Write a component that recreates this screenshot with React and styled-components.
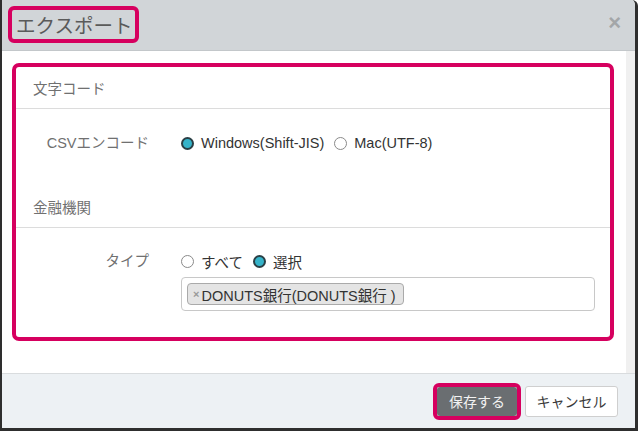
import React from 'react';
import styled, { createGlobalStyle } from 'styled-components';

const GlobalStyle = createGlobalStyle`
  html, body {
    margin: 0;
    padding: 0;
    background: #ffffff;
  }
  body {
    font-family: "Liberation Sans", "Noto Sans CJK JP", sans-serif;
  }
  * {
    box-sizing: border-box;
  }
`;

const MAGENTA = '#d6005f';

const Frame = styled.div`
  width: 638px;
  height: 431px;
  display: flex;
  flex-direction: column;
  border-left: 2px solid #2e2e2e;
  border-right: 3px solid #2e2e2e;
  border-bottom: 3px solid #2e2e2e;
  border-top-right-radius: 6px;
  overflow: hidden;
  background: #fff;
`;

const Header = styled.div`
  height: 51px;
  flex: none;
  display: flex;
  justify-content: space-between;
  align-items: flex-start;
  padding: 6px 14px 0 6px;
  background: #d1d5d8;
  border-bottom: 1px solid #c3c7ca;
`;

const Highlight = styled.div`
  border: 4px solid ${MAGENTA};
  border-radius: 6px;
  padding: ${({ pad }) => pad || '0'};
`;

const Title = styled.h4`
  margin: 0;
  font-size: 19.5px;
  font-weight: normal;
  line-height: 29px;
  color: #5a5a5a;
  font-family: "Noto Sans CJK JP", sans-serif;
`;

const Close = styled.span`
  margin-top: 7px;
  font-size: 22px;
  line-height: 20px;
  font-weight: bold;
  color: #a3a6a8;
`;

const Body = styled.div`
  flex: 1;
  display: flex;
  border-bottom: 1px solid #d9dcde;
`;

const Content = styled.div`
  flex: 1;
  padding: 12px 12px 0 10px;
`;

const ScrollTrack = styled.div`
  width: 9px;
  background: #f0f0f0;
`;

const Panel = styled.div`
  border: 4px solid ${MAGENTA};
  border-radius: 7px;
  padding-bottom: 26px;
`;

const Legend = styled.div`
  height: 42px;
  line-height: 41px;
  padding-left: 17px;
  font-size: 14.5px;
  color: #707070;
  font-family: "Noto Sans CJK JP", sans-serif;
  border-bottom: 1px solid #dcdcdc;
  margin-top: ${({ top }) => top || '0'};
`;

const FormRow = styled.div`
  display: grid;
  grid-template-columns: 148px 1fr;
  margin-top: ${({ top }) => top};
`;

const Label = styled.div`
  text-align: right;
  padding-right: 15px;
  font-size: 14.5px;
  line-height: 20px;
  color: #707070;
`;

const Control = styled.div`
  padding: 0 15px 0 17px;
  display: flex;
  flex-direction: column;
  gap: 6px;
`;

const Radios = styled.div`
  display: flex;
  align-items: center;
  height: 20px;
`;

const RadioItem = styled.label`
  display: flex;
  align-items: center;
  gap: 7px;
  margin-right: 10px;
  font-size: 14.5px;
  color: #333;
`;

const Dot = styled.span`
  width: 13px;
  height: 13px;
  border-radius: 50%;
  flex: none;
  border: ${({ checked }) => (checked ? '2.5px solid #2a3f45' : '1.5px solid #8a8a8a')};
  background: ${({ checked }) => (checked ? '#35b3c9' : '#fff')};
`;

const SelectBox = styled.div`
  height: 34px;
  border: 1px solid #c8c8c8;
  border-radius: 4px;
  padding: 5px 5px;
  display: flex;
  align-items: flex-start;
`;

const Tag = styled.span`
  display: inline-flex;
  align-items: center;
  height: 22px;
  padding: 0 7px 0 5px;
  background: #e4e4e4;
  border: 1px solid #aaa;
  border-radius: 4px;
  font-size: 14.5px;
  color: #333;
`;

const TagRemove = styled.span`
  color: #999;
  font-size: 11px;
  font-weight: bold;
  margin-right: 2px;
`;

const Footer = styled.div`
  height: 54px;
  flex: none;
  display: flex;
  justify-content: flex-end;
  align-items: center;
  gap: 4px;
  padding-right: 17px;
  background: #edf1f4;
`;

const Button = styled.button`
  font-family: "Noto Sans CJK JP", sans-serif;
  font-size: 14px;
  border-radius: 3px;
  cursor: pointer;
  width: ${({ w }) => w};
  height: ${({ h }) => h};
  padding: 0;
  color: ${({ primary }) => (primary ? '#f2f2f2' : '#3a3a3a')};
  background: ${({ primary }) => (primary ? '#6a6e71' : '#fff')};
  border: ${({ primary }) => (primary ? 'none' : '1px solid #cfcfcf')};
  display: block;
`;

const radio = (text, checked) => (
  <RadioItem>
    <Dot checked={checked} />
    {text}
  </RadioItem>
);

export default function App() {
  return (
    <>
      <GlobalStyle />
      <Frame>
        <Header>
          <Highlight pad="0 3px 0 4px">
            <Title>エクスポート</Title>
          </Highlight>
          <Close>×</Close>
        </Header>
        <Body>
          <Content>
            <Panel>
              <Legend>文字コード</Legend>
              <FormRow top="24px">
                <Label>CSVエンコード</Label>
                <Control>
                  <Radios>
                    {radio('Windows(Shift-JIS)', true)}
                    {radio('Mac(UTF-8)', false)}
                  </Radios>
                </Control>
              </FormRow>
              <Legend top="33px">金融機関</Legend>
              <FormRow top="23px">
                <Label>タイプ</Label>
                <Control>
                  <Radios>
                    {radio('すべて', false)}
                    {radio('選択', true)}
                  </Radios>
                  <SelectBox>
                    <Tag>
                      <TagRemove>×</TagRemove>
                      DONUTS銀行(DONUTS銀行 )
                    </Tag>
                  </SelectBox>
                </Control>
              </FormRow>
            </Panel>
          </Content>
          <ScrollTrack />
        </Body>
        <Footer>
          <Highlight>
            <Button primary w="80px" h="29px">保存する</Button>
          </Highlight>
          <Button w="93px" h="31px">キャンセル</Button>
        </Footer>
      </Frame>
    </>
  );
}
